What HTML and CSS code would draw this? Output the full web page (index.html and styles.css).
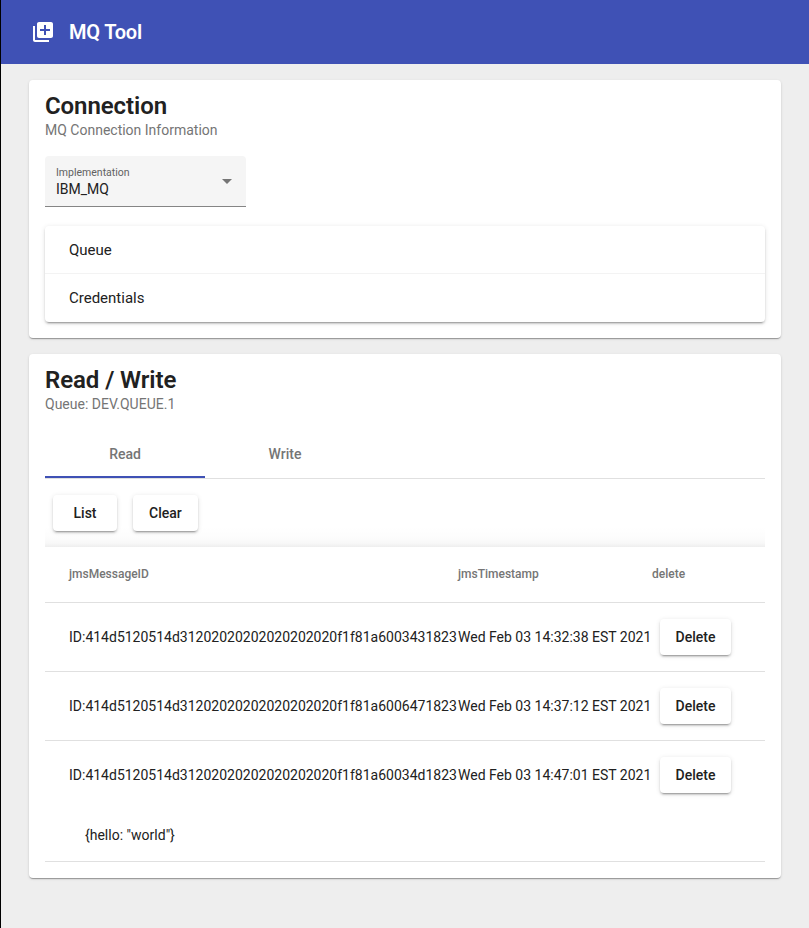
FILE: index.html
```html
<!DOCTYPE html>
<html lang="en">
<head>
<meta charset="utf-8">
<title>MQ Tool</title>
<link rel="stylesheet" href="styles.css">
</head>
<body>
<header class="toolbar">
  <svg class="logo" viewBox="0 0 24 24"><path d="M4 6H2v14c0 1.100.9 2 2 2h14v-2H4V6zm16-4H8c-1.100 0-2 .9-2 2v12c0 1.100.9 2 2 2h12c1.100 0 2-.9 2-2V4c0-1.100-.9-2-2-2zm-1 9h-4v4h-2v-4H9V9h4V5h2v4h4v2z"/></svg>
  <h1 class="brand">MQ Tool</h1>
</header>
<main class="content">
  <section class="card">
    <h2 class="title">Connection</h2>
    <p class="subtitle">MQ Connection Information</p>
    <div class="select">
      <div class="field">
        <span class="label">Implementation</span>
        <span class="value">IBM_MQ</span>
      </div>
      <span class="arrow"></span>
    </div>
    <div class="accordion">
      <div class="panel">Queue</div>
      <div class="panel">Credentials</div>
    </div>
  </section>
  <section class="card">
    <h2 class="title">Read / Write</h2>
    <p class="subtitle">Queue: DEV.QUEUE.1</p>
    <nav class="tabs">
      <div class="tab active">Read</div>
      <div class="tab">Write</div>
    </nav>
    <div class="actions">
      <button class="button">List</button>
      <button class="button">Clear</button>
    </div>
    <div class="table">
      <div class="row head"><span>jmsMessageID</span><span>jmsTimestamp</span><span>delete</span></div>
      <div class="row"><span>ID:414d5120514d31202020202020202020f1f81a6003431823</span><span>Wed Feb 03 14:32:38 EST 2021</span><button class="button">Delete</button></div>
      <div class="row"><span>ID:414d5120514d31202020202020202020f1f81a6006471823</span><span>Wed Feb 03 14:37:12 EST 2021</span><button class="button">Delete</button></div>
      <div class="row open"><span>ID:414d5120514d31202020202020202020f1f81a60034d1823</span><span>Wed Feb 03 14:47:01 EST 2021</span><button class="button">Delete</button></div>
      <div class="detail">{hello: "world"}</div>
    </div>
  </section>
</main>
</body>
</html>
```
FILE: styles.css
```css
* { box-sizing: border-box; }

body {
  margin: 0;
  min-height: 928px;
  border-left: 1px solid #000;
  background: #eee;
  color: #212121;
  font: 400 14px/20px Roboto, sans-serif;
}

.toolbar {
  display: flex;
  align-items: center;
  gap: 14px;
  height: 64px;
  padding: 0 30px;
  background: #3f51b5;
  color: #fff;
}

.logo { width: 24px; height: 24px; fill: #fff; }
.brand { margin: 0; font-size: 20px; font-weight: 600; line-height: 32px; letter-spacing: -.2px; }

.content {
  display: flex;
  flex-direction: column;
  gap: 16px;
  padding: 16px 28px;
}

.card {
  padding: 10px 16px 16px;
  border-radius: 4px;
  background: #fff;
  box-shadow: 0 2px 1px -1px rgba(0, 0, 0, .2), 0 1px 1px rgba(0, 0, 0, .14), 0 1px 3px rgba(0, 0, 0, .12);
}

.title { margin: 0; font-size: 24px; font-weight: 600; line-height: 32px; letter-spacing: -.08px; }
.subtitle { margin: 0; line-height: 16px; color: #757575; }

.select {
  display: flex;
  align-items: center;
  justify-content: space-between;
  width: 201px;
  height: 51px;
  margin-top: 18px;
  padding: 0 14px 0 11px;
  border-bottom: 1px solid #858585;
  border-radius: 4px 4px 0 0;
  background: #f5f5f5;
}

.field { display: flex; flex-direction: column; }
.label { font-size: 10.5px; line-height: 16px; color: #616161; }
.value { line-height: 17px; }

.arrow {
  margin-top: 1px;
  border: 5px solid transparent;
  border-top-color: #757575;
  border-bottom: 0;
}

.accordion {
  margin-top: 19px;
  border-radius: 4px;
  box-shadow: 0 3px 1px -2px rgba(0, 0, 0, .2), 0 2px 2px rgba(0, 0, 0, .14), 0 1px 5px rgba(0, 0, 0, .12);
}

.panel { height: 48px; padding-left: 24px; font-size: 15px; line-height: 48px; }
.panel:first-child { border-bottom: 1px solid #f3f3f3; }

.tabs { display: flex; height: 49px; margin-top: 18px; border-bottom: 1px solid #e0e0e0; }
.tab {
  width: 160px;
  height: 48px;
  color: #757575;
  font-weight: 500;
  line-height: 48px;
  text-align: center;
}
.tab.active { border-bottom: 2px solid #3f51b5; }

.actions {
  display: flex;
  gap: 16px;
  height: 68px;
  padding: 16px 8px;
  background: linear-gradient(#fff 48px, #fcfcfc 59px, #f8f8f8 64px, #eee 68px);
}

.button {
  min-width: 64px;
  height: 36px;
  padding: 0 16px;
  border: 0;
  border-radius: 4px;
  background: #fff;
  color: #212121;
  font: 500 14px/36px Roboto, sans-serif;
  box-shadow: 0 3px 1px -2px rgba(0, 0, 0, .2), 0 2px 2px rgba(0, 0, 0, .14), 0 1px 5px rgba(0, 0, 0, .12);
}

.row {
  display: grid;
  grid-template-columns: 389px 194px auto;
  align-items: center;
  justify-content: start;
  height: 69px;
  padding-left: 24px;
  border-bottom: 1px solid #e0e0e0;
  white-space: nowrap;
}
.row .button { width: 71px; margin-left: 8px; padding: 0; }
.row.head { height: 56px; padding-bottom: 1px; color: #757575; font-size: 12px; font-weight: 500; }
.row.open { height: 68px; border-bottom: 0; }

.detail {
  height: 53px;
  padding: 16px 40px;
  border-bottom: 1px solid #e0e0e0;
}
```
